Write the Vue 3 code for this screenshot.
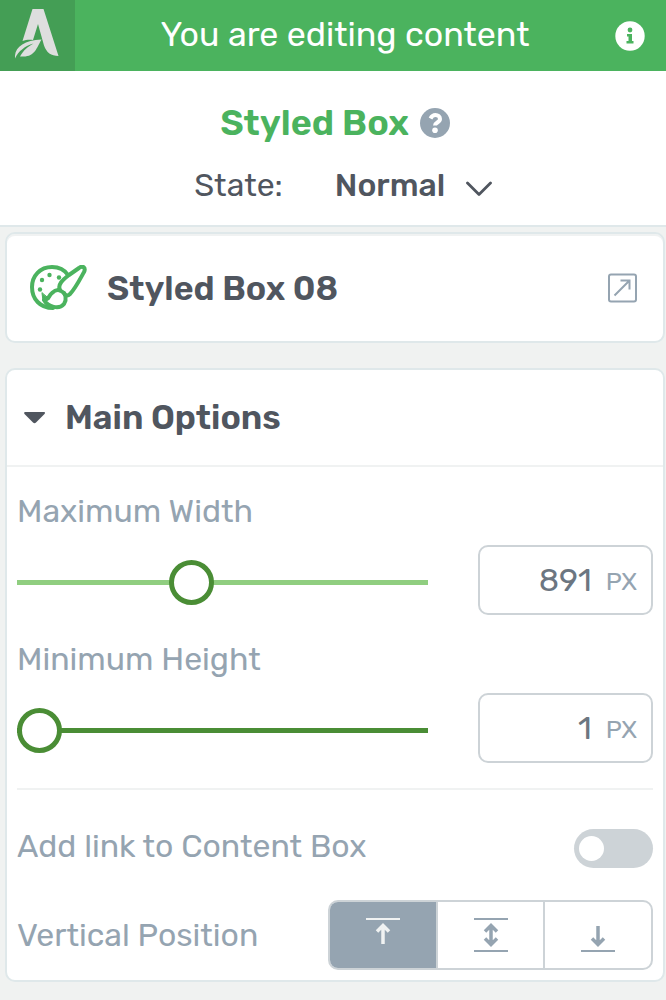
<script setup>
import { ref } from 'vue'

const state = ref('Normal')
const maxWidth = ref(891)
const minHeight = ref(1)
const linked = ref(false)
const position = ref('top')
</script>

<template>
  <div class="panel">
    <header class="topbar">
      <a class="brand" href="#" aria-label="Home">
        <svg width="44" height="50" viewBox="0 0 44 50" fill="#dedede">
          <path d="M17.500 0H28.500L43.500 47C36 47 31.500 43.500 29 36.500L23 15L18 31C14 30.500 10.500 31 7.500 32Z" />
          <path d="M0 49.500C-1 39 8 31.500 26.500 30.500C21.500 39 20 47.500 8.500 47.500H5C8.500 41 13 37.500 18.500 34.500C10 37 3.500 42 0 49.500Z" />
        </svg>
      </a>
      <span class="status">You are editing content</span>
      <button class="info" type="button" aria-label="Information">
        <svg width="30" height="30" viewBox="0 0 30 30">
          <circle cx="15" cy="15" r="14.700" fill="#fff" />
          <circle cx="15" cy="9" r="2.400" fill="#4bb35e" />
          <path d="M12 13H17V20H18.500V22.500H11.500V20H13.500V15.500H12Z" fill="#4bb35e" />
        </svg>
      </button>
    </header>

    <section class="heading">
      <div class="title-row">
        <h1>Styled Box</h1>
        <button class="help" type="button" aria-label="Help">
          <svg width="30" height="30" viewBox="0 0 30 30" fill="none">
            <circle cx="15" cy="15" r="15" fill="#95a4b1" />
            <path d="M10.500 10.500C12 7.500 14 7 15.500 7C18 7 20 8.500 20 11C20 14.500 15 14.500 15 17.500" stroke="#fff" stroke-width="4" />
            <circle cx="15" cy="22.300" r="2.800" fill="#fff" />
          </svg>
        </button>
      </div>
      <div class="state-row">
        <label for="state">State:</label>
        <div class="state-select">
          <select id="state" v-model="state">
            <option>Normal</option>
          </select>
          <svg width="26" height="15" viewBox="0 0 26 15" fill="none" stroke="#50565f" stroke-width="2.800" stroke-linecap="round" stroke-linejoin="round">
            <path d="M1.500 2L13 13.500L24.500 2" />
          </svg>
        </div>
      </div>
    </section>

    <main class="content">
      <section class="card template">
        <svg width="58" height="46" viewBox="0 0 58 46" fill="none" stroke="#4bb35e" stroke-width="4" stroke-linejoin="round" stroke-linecap="round">
          <path d="M38 10C34 4 28 2 22 2C10 2 2 11 2 22C2 34 10 43 23 43" />
          <path d="M30 25C27 19 34 14 39 10L49 3C53 0 56 3 54 7C49 16 45 24 40 29C37 32 35 30 34 28" />
          <path d="M31 26C36 28 37 34 34 39C29 45 18 42 14 35C20 34 18 31 22 28C25 25 28 24 31 26Z" />
          <path d="M12 28L13 36L19 34Z" fill="#4bb35e" stroke-width="1" />
          <g fill="#4bb35e" stroke="none">
            <circle cx="12" cy="15" r="2.200" />
            <circle cx="19.500" cy="10" r="2.200" />
            <circle cx="29" cy="12.500" r="2.200" />
            <circle cx="10" cy="24.500" r="2.200" />
          </g>
        </svg>
        <h2>Styled Box 08</h2>
        <button class="open" type="button" aria-label="Change template">
          <svg width="30" height="30" viewBox="0 0 30 30" fill="none" stroke="#95a4b1" stroke-width="2">
            <rect x="1" y="1.500" width="27" height="27" rx="2" />
            <path d="M6.500 22.500L21 8M12.500 7.500H21.500V16.500" />
          </svg>
        </button>
      </section>

      <section class="card options">
        <button class="section-head" type="button" aria-expanded="true">
          <svg width="22" height="12" viewBox="0 0 22 12" fill="#50565f">
            <path d="M1 0H20C21.500 0 21 1.500 20.500 2L12 10.500C11 11.500 10 11.500 9 10.500L0.500 2C0 1.500 0 0 1 0Z" />
          </svg>
          <span>Main Options</span>
        </button>

        <div class="fields">
          <div class="sliders">
            <div class="field">
              <label for="max-width">Maximum Width</label>
              <div class="control">
                <input id="max-width" v-model="maxWidth" class="slider" type="range" min="0" max="2145">
                <div class="value">
                  <input v-model="maxWidth" type="text" inputmode="numeric" aria-label="Maximum Width value">
                  <span>PX</span>
                </div>
              </div>
            </div>

            <div class="field">
              <label for="min-height">Minimum Height</label>
              <div class="control">
                <input id="min-height" v-model="minHeight" class="slider dark" type="range" min="1" max="1000">
                <div class="value">
                  <input v-model="minHeight" type="text" inputmode="numeric" aria-label="Minimum Height value">
                  <span>PX</span>
                </div>
              </div>
            </div>
          </div>

          <div class="rows">
            <div class="row link-row">
              <label for="link">Add link to Content Box</label>
              <input id="link" v-model="linked" class="toggle" type="checkbox" role="switch">
            </div>

            <div class="row">
              <span id="position-label">Vertical Position</span>
              <div class="segments" role="radiogroup" aria-labelledby="position-label">
                <label :class="{ active: position === 'top' }">
                  <input v-model="position" type="radio" name="position" value="top" aria-label="Top">
                  <svg width="34" height="36" viewBox="0 0 34 36">
                    <path class="bar" d="M0 2H34" />
                    <path class="arrow" d="M17 27V8M11 14.500L17 8.500L23 14.500" />
                  </svg>
                </label>
                <label :class="{ active: position === 'center' }">
                  <input v-model="position" type="radio" name="position" value="center" aria-label="Center">
                  <svg width="34" height="36" viewBox="0 0 34 36">
                    <path class="bar" d="M0 2H34M0 34H34" />
                    <path class="arrow" d="M17 8V28M11 14.500L17 8.500L23 14.500M11 21.500L17 27.500L23 21.500" />
                  </svg>
                </label>
                <label :class="{ active: position === 'bottom' }">
                  <input v-model="position" type="radio" name="position" value="bottom" aria-label="Bottom">
                  <svg width="34" height="36" viewBox="0 0 34 36">
                    <path class="bar" d="M0 34H34" />
                    <path class="arrow" d="M17 9V28M11 21.500L17 27.500L23 21.500" />
                  </svg>
                </label>
              </div>
            </div>
          </div>
        </div>
      </section>
    </main>
  </div>
</template>

<style>
body {
  margin: 0;
  background: #f0f2f1;
}
</style>

<style scoped>
.panel {
  font-family: Rubik, Roboto, "Liberation Sans", sans-serif;
  font-size: 32px;
  line-height: 40px;
  color: #50565f;
}
.panel * {
  box-sizing: border-box;
}
svg {
  display: block;
  flex: none;
}
button {
  padding: 0;
  border: 0;
  background: none;
  font: inherit;
  color: inherit;
  cursor: pointer;
}
input,
select {
  margin: 0;
  font: inherit;
  color: inherit;
}
h1,
h2 {
  margin: 0;
  font-weight: 600;
}
.topbar {
  display: flex;
  align-items: center;
  height: 71px;
  background: #4bb35e;
  color: #fff;
}
.brand {
  display: flex;
  align-items: center;
  justify-content: center;
  width: 75px;
  height: 100%;
  padding: 0 2px 4px 0;
  background: #449e55;
}
.status {
  flex: 1;
  padding-bottom: 2px;
  font-size: 34px;
  text-align: center;
}
.info {
  margin-right: 21px;
}
.heading {
  display: flex;
  flex-direction: column;
  gap: 22px;
  padding: 32px 0 20px;
  border-bottom: 2px solid #dfe8ea;
  background: #fff;
}
.title-row,
.state-row,
.state-select {
  display: flex;
  align-items: center;
  justify-content: center;
}
.title-row {
  gap: 11px;
  padding-left: 4px;
}
h1 {
  font-size: 36px;
  color: #4bb35e;
}
.state-row {
  gap: 48px;
  padding-left: 20px;
}
.state-select {
  position: relative;
}
.state-select select {
  padding: 0 46px 0 4px;
  border: 0;
  background: transparent;
  font-weight: 500;
  line-height: 40px;
  appearance: none;
}
.state-select svg {
  position: absolute;
  right: 0;
  top: 16px;
  pointer-events: none;
}
.content {
  display: flex;
  flex-direction: column;
  gap: 25px;
  padding: 5px 1px 18px 5px;
}
.card {
  border: 2px solid #dfe8ea;
  border-radius: 10px;
  background: #fff;
}
.template {
  display: flex;
  align-items: center;
  height: 111px;
  padding: 1px 25px 0 23px;
  box-shadow: inset 0 2px #f0f2f2;
}
h2 {
  flex: 1;
  padding: 2px 0 0 19px;
  font-size: 34px;
}
.section-head {
  display: flex;
  align-items: center;
  gap: 19px;
  width: 100%;
  height: 97px;
  padding: 0 17px;
  border-bottom: 2px solid #f0f2f2;
  font-size: 34px;
  font-weight: 600;
}
.fields {
  padding: 24px 10px 10px;
  color: #95a4b1;
}
.sliders {
  display: flex;
  flex-direction: column;
  gap: 24px;
  margin-bottom: 25px;
}
.field > label {
  display: block;
  margin-bottom: 14px;
}
.control {
  display: flex;
  align-items: center;
  gap: 50px;
}
.slider {
  --track: #90ce80;
  flex: 1;
  min-width: 0;
  height: 45px;
  margin-top: 4px;
  background: linear-gradient(var(--track), var(--track)) center / 100% 5px no-repeat;
  appearance: none;
}
.slider.dark {
  --track: #4a8d35;
}
.slider::-webkit-slider-thumb {
  width: 45px;
  height: 45px;
  border: 5px solid #4a8d35;
  border-radius: 50%;
  background: #fff;
  appearance: none;
}
.value {
  display: flex;
  align-items: center;
  gap: 14px;
  width: 175px;
  height: 70px;
  padding: 0 14px;
  border: 2px solid #cdd3d7;
  border-radius: 10px;
}
.value input {
  flex: 1;
  min-width: 0;
  padding: 0;
  border: 0;
  background: none;
  font-size: 32px;
  text-align: right;
  color: #6c7681;
}
.value span {
  padding-top: 4px;
  font-size: 25px;
}
.row {
  display: flex;
  align-items: center;
  justify-content: space-between;
}
.link-row {
  height: 112px;
  padding-top: 6px;
  border-top: 2px solid #f0f2f2;
}
.link-row label {
  padding-bottom: 4px;
}
.toggle {
  display: flex;
  align-items: center;
  width: 79px;
  height: 39px;
  padding: 0 5px;
  border-radius: 20px;
  background: #cdd3d7;
  appearance: none;
}
.toggle::before {
  content: "";
  width: 25px;
  height: 25px;
  border-radius: 50%;
  background: #fff;
}
.toggle:checked {
  justify-content: flex-end;
  background: #4bb35e;
}
.segments {
  display: flex;
  width: 325px;
  height: 70px;
  overflow: hidden;
  border: 2px solid #cdd3d7;
  border-radius: 10px;
}
.segments label {
  position: relative;
  display: flex;
  flex: 1;
  align-items: center;
  justify-content: center;
}
.segments label + label {
  border-left: 2px solid #cdd3d7;
}
.segments input {
  position: absolute;
  inset: 0;
  opacity: 0;
}
.segments svg {
  fill: none;
  stroke: #95a4b1;
}
.segments .active {
  background: #95a4b1;
}
.segments .active svg {
  stroke: #f0f2f2;
}
.bar {
  stroke-width: 2;
}
.arrow {
  stroke-width: 3.5;
}
</style>
